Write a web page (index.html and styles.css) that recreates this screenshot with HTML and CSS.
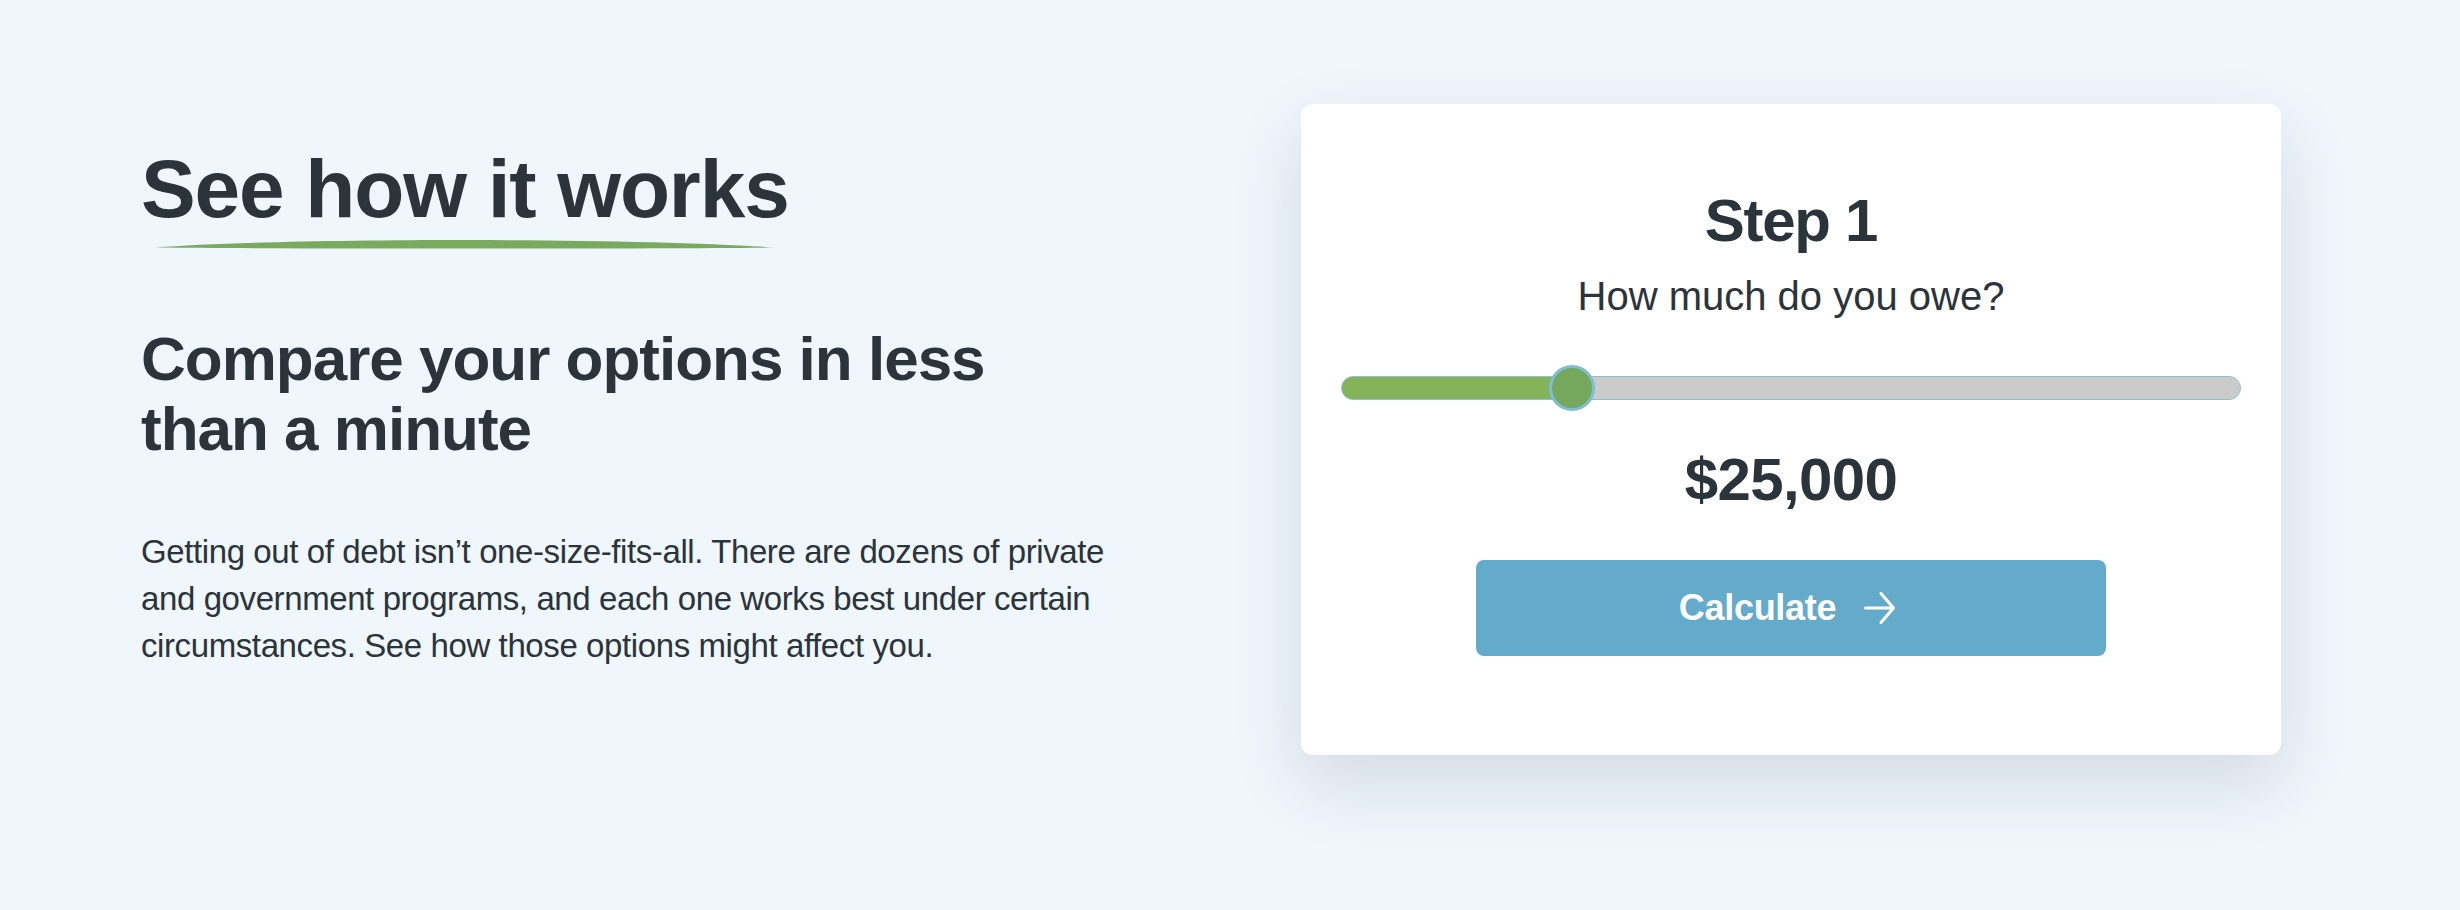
FILE: index.html
```html
<!DOCTYPE html>
<html lang="en">
<head>
<meta charset="utf-8">
<title>See how it works</title>
<link rel="stylesheet" href="styles.css">
</head>
<body>
<section class="how">
  <div class="intro">
    <h2 class="title">See how it works</h2>
    <svg class="swoosh" width="620" height="10" viewBox="0 0 620 10" aria-hidden="true">
      <path d="M0 8.6 C 130 -1.5, 490 -1.5, 620 8.6 C 490 9.9, 130 9.9, 0 8.6 Z" fill="#7aaa5e"/>
    </svg>
    <h3 class="subtitle">Compare your options in less than a minute</h3>
    <p class="lead">Getting out of debt isn’t one-size-fits-all. There are dozens of private and government programs, and each one works best under certain circumstances. See how those options might affect you.</p>
  </div>
  <div class="card">
    <div class="step">Step 1</div>
    <div class="question">How much do you owe?</div>
    <div class="slider">
      <div class="track"><div class="fill" style="width:25.7%"></div></div>
      <div class="thumb" style="left:calc(25.7% - 23px)"></div>
    </div>
    <div class="amount">$25,000</div>
    <button class="calc" type="button">
      <span>Calculate</span>
      <svg class="arrow" width="31" height="32" viewBox="0 0 31 32" aria-hidden="true">
        <path d="M1.5 16 H29.5 M17 1.5 L29.5 16 L17 30.5" fill="none" stroke="#ffffff" stroke-width="3" stroke-linecap="round" stroke-linejoin="round"/>
      </svg>
    </button>
  </div>
</section>
</body>
</html>
```

FILE: styles.css
```css
html, body {
  margin: 0;
  padding: 0;
}

body {
  background: #eff6fc;
  color: #2b333b;
  font-family: "Liberation Sans", Arial, Helvetica, sans-serif;
  height: 910px;
  overflow: hidden;
}

.how {
  display: flex;
  align-items: flex-start;
  gap: 185px;
  padding: 104px 0 0 141px;
}

.intro {
  width: 975px;
  margin-top: 37px;
  display: flex;
  flex-direction: column;
}

.title {
  margin: 0;
  font-size: 82px;
  line-height: 96px;
  font-weight: 700;
  letter-spacing: -1.1px;
}

.swoosh {
  display: block;
  margin: 2px 0 0 14px;
}

.subtitle {
  margin: 75px 0 0;
  font-size: 62px;
  line-height: 70px;
  font-weight: 700;
  letter-spacing: -1px;
}

.lead {
  margin: 64px 0 0;
  font-size: 33px;
  line-height: 47px;
  letter-spacing: -0.4px;
}

.card {
  width: 980px;
  height: 651px;
  box-sizing: border-box;
  background: #ffffff;
  border-radius: 12px;
  box-shadow: 0 28px 70px rgba(40, 60, 80, 0.14);
  padding-top: 81px;
  display: flex;
  flex-direction: column;
  align-items: center;
}

.step {
  font-size: 60px;
  line-height: 72px;
  font-weight: 700;
  letter-spacing: -1.3px;
}

.question {
  margin-top: 15px;
  font-size: 40px;
  line-height: 48px;
}

.slider {
  position: relative;
  align-self: stretch;
  margin: 44px 40px 0;
  height: 48px;
}

.track {
  margin-top: 12px;
  height: 24px;
  box-sizing: border-box;
  border: 1px solid #8dc0d6;
  border-radius: 12px;
  background: #cbcbcb;
  overflow: hidden;
}

.fill {
  height: 100%;
  background: #84b35a;
}

.thumb {
  position: absolute;
  top: 1px;
  width: 46px;
  height: 46px;
  box-sizing: border-box;
  border-radius: 50%;
  background: #75a85c;
  border: 3px solid #7dbdd6;
}

.amount {
  margin-top: 32px;
  font-size: 60px;
  line-height: 72px;
  font-weight: 700;
  letter-spacing: -0.6px;
}

.calc {
  margin-top: 44px;
  width: 630px;
  height: 96px;
  border: 0;
  border-radius: 8px;
  background: #63aacb;
  color: #ffffff;
  font-family: "Liberation Sans", Arial, Helvetica, sans-serif;
  font-size: 36px;
  font-weight: 700;
  letter-spacing: -0.3px;
  display: flex;
  align-items: center;
  justify-content: center;
  gap: 28px;
  padding: 0 8px 0 0;
  cursor: pointer;
}

.arrow {
  display: block;
}
```
